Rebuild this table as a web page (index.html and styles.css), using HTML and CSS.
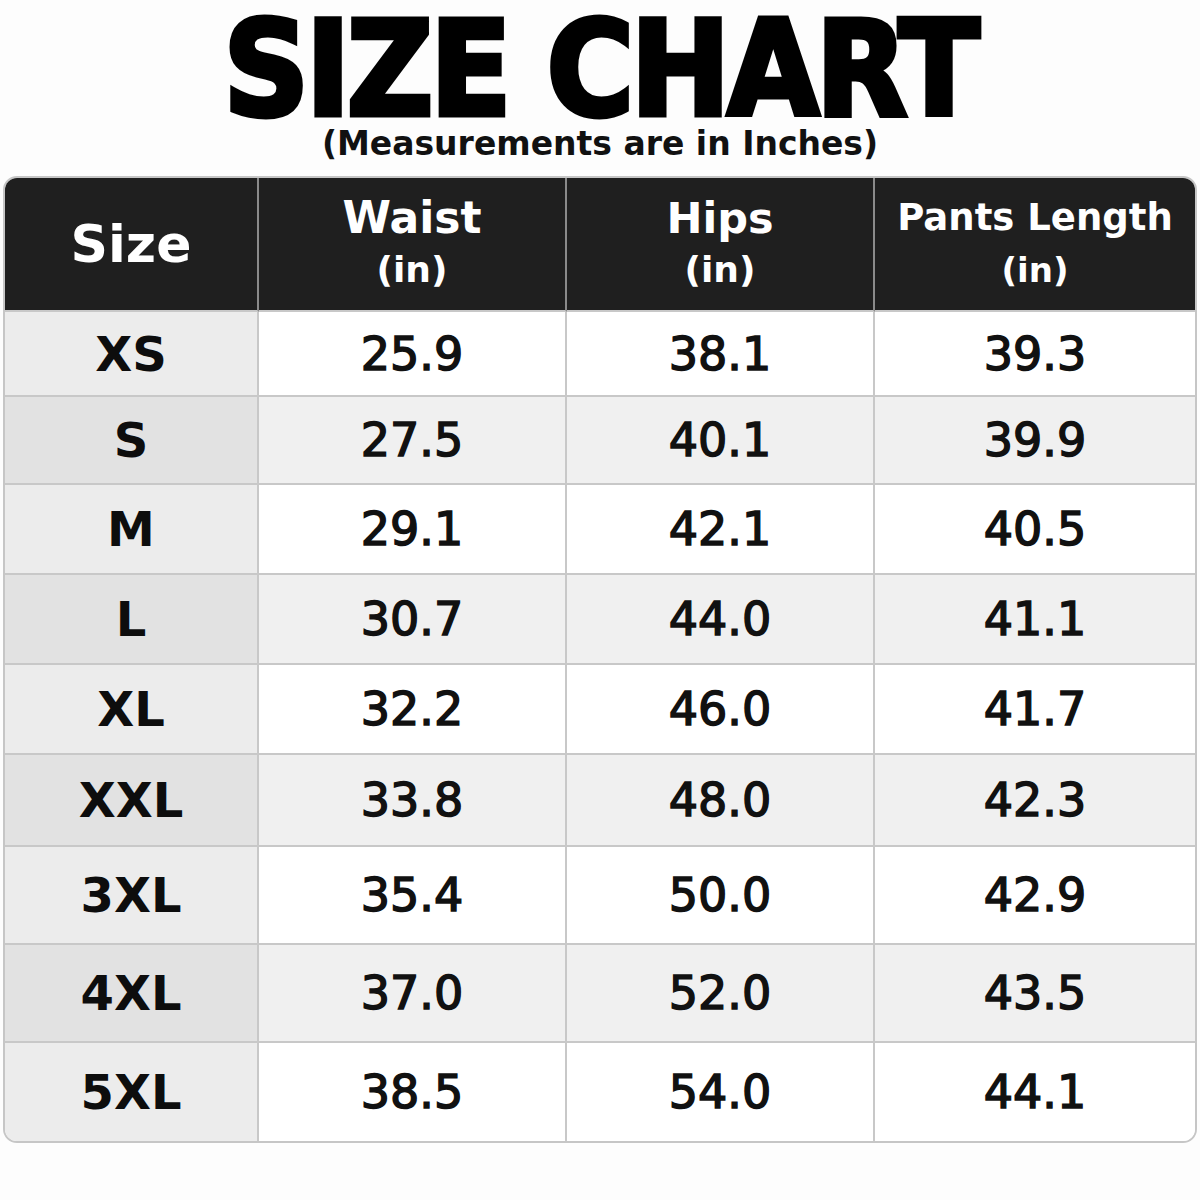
FILE: index.html
```html
<!DOCTYPE html>
<html lang="en">
<head>
<meta charset="utf-8">
<title>Size Chart</title>
<link rel="stylesheet" href="styles.css">
</head>
<body>
<div class="page">
  <header class="heading">
    <h1 class="title">SIZE CHART</h1>
    <p class="subtitle">(Measurements are in Inches)</p>
  </header>
  <div class="chart">
    <div class="cell head size-head"><span class="h-size">Size</span></div>
    <div class="cell head"><span class="h-main h-waist">Waist</span><span class="h-unit">(in)</span></div>
    <div class="cell head"><span class="h-main h-hips">Hips</span><span class="h-unit">(in)</span></div>
    <div class="cell head last-col"><span class="h-main h-pants">Pants Length</span><span class="h-unit h-unit-sm">(in)</span></div>

    <div class="cell sz odd">XS</div><div class="cell val odd">25.9</div><div class="cell val odd">38.1</div><div class="cell val odd last-col">39.3</div>
    <div class="cell sz even">S</div><div class="cell val even">27.5</div><div class="cell val even">40.1</div><div class="cell val even last-col">39.9</div>
    <div class="cell sz odd">M</div><div class="cell val odd">29.1</div><div class="cell val odd">42.1</div><div class="cell val odd last-col">40.5</div>
    <div class="cell sz even">L</div><div class="cell val even">30.7</div><div class="cell val even">44.0</div><div class="cell val even last-col">41.1</div>
    <div class="cell sz odd">XL</div><div class="cell val odd">32.2</div><div class="cell val odd">46.0</div><div class="cell val odd last-col">41.7</div>
    <div class="cell sz even">XXL</div><div class="cell val even">33.8</div><div class="cell val even">48.0</div><div class="cell val even last-col">42.3</div>
    <div class="cell sz odd">3XL</div><div class="cell val odd">35.4</div><div class="cell val odd">50.0</div><div class="cell val odd last-col">42.9</div>
    <div class="cell sz even">4XL</div><div class="cell val even">37.0</div><div class="cell val even">52.0</div><div class="cell val even last-col">43.5</div>
    <div class="cell sz odd last-row">5XL</div><div class="cell val odd last-row">38.5</div><div class="cell val odd last-row">54.0</div><div class="cell val odd last-col last-row">44.1</div>
  </div>
</div>
</body>
</html>
```

FILE: styles.css
```css
* { box-sizing: border-box; }

html, body {
  margin: 0;
  padding: 0;
  background: #fdfdfd;
}

.page {
  width: 1200px;
  height: 1200px;
  padding: 19px 3px 0 3px;
  font-family: "DejaVu Sans", "Liberation Sans", sans-serif;
  color: #111;
}

.heading {
  display: flex;
  flex-direction: column;
  align-items: center;
}

.title {
  margin: 0;
  font-family: "DejaVu Sans Condensed", "DejaVu Sans", sans-serif;
  font-stretch: condensed;
  font-weight: 700;
  font-size: 132px;
  line-height: 100px;
  letter-spacing: -3px;
  color: #000;
  -webkit-text-stroke: 5px #000;
}

.subtitle {
  margin: 7px 0 0 0;
  font-weight: 700;
  font-size: 33px;
  line-height: 36px;
  color: #111;
}

.chart {
  margin-top: 14px;
  width: 1194px;
  border: 2px solid #c6c6c6;
  border-radius: 14px;
  overflow: hidden;
  display: grid;
  grid-template-columns: 254px 308px 308px 320px;
  grid-template-rows: 134px 85px 88px 90px 90px 90px 92px 98px 98px 98px;
  background: #fff;
}

.cell {
  display: flex;
  flex-direction: column;
  align-items: center;
  justify-content: center;
  border-right: 2px solid #c8c8c8;
  border-bottom: 2px solid #c8c8c8;
}

.last-col { border-right: none; }
.last-row { border-bottom: none; }

.head {
  background: #1f1f1f;
  color: #fff;
  font-weight: 700;
  border-right: 2px solid #8a8a8a;
  border-bottom: 2px solid #c8c8c8;
}
.head.last-col { border-right: none; }

.h-size {
  font-size: 52px;
  line-height: 60px;
}

.h-main {
  line-height: 52px;
}
.h-waist { font-size: 44px; }
.h-hips { font-size: 43px; }
.h-pants { font-size: 37px; }

.h-unit {
  font-size: 36px;
  line-height: 52px;
}
.h-unit-sm { font-size: 34px; }

.sz {
  font-weight: 700;
  font-size: 48px;
  color: #0d0d0d;
}
.sz.odd { background: #ececec; }
.sz.even { background: #e2e2e2; }

.val {
  font-weight: 400;
  font-size: 46px;
  color: #111;
  -webkit-text-stroke: 1.5px #111;
}
.val.odd { background: #ffffff; }
.val.even { background: #f0f0f0; }
```
